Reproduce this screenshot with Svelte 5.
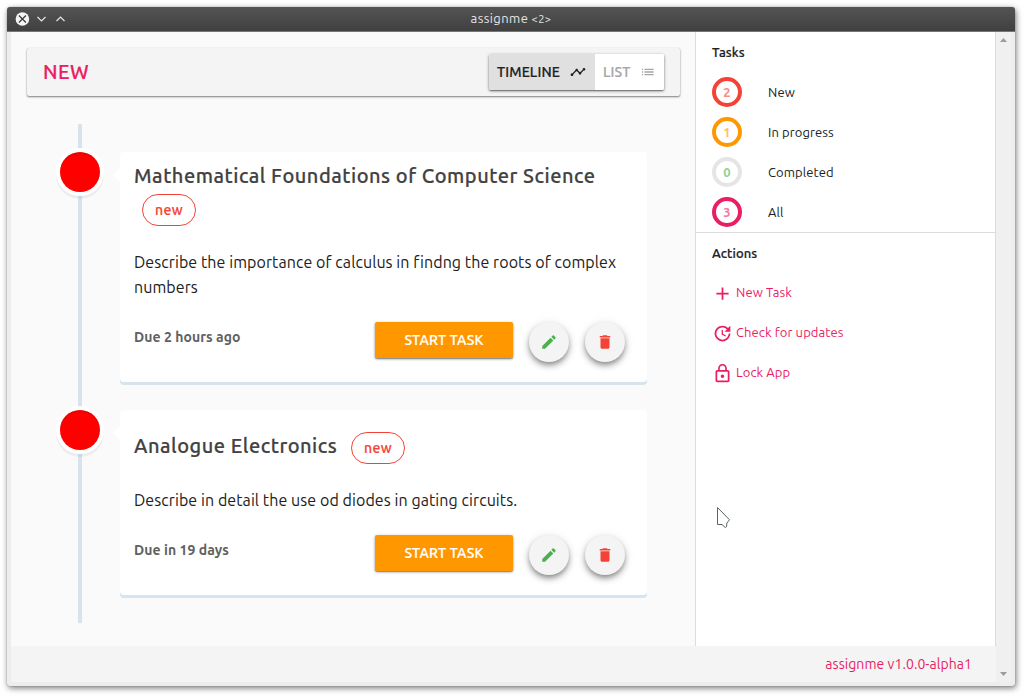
<script>
  const tasks = [
    { title: 'Mathematical Foundations of Computer Science', text: 'Describe the importance of calculus in findng the roots of complex numbers', due: 'Due 2 hours ago', wrapped: true },
    { title: 'Analogue Electronics', text: 'Describe in detail the use od diodes in gating circuits.', due: 'Due in 19 days', wrapped: false }
  ];
  const counts = [
    { n: 2, label: 'New', ring: '#f44336', ink: '#f98e86' },
    { n: 1, label: 'In progress', ring: '#ff9800', ink: '#ffc166' },
    { n: 0, label: 'Completed', ring: '#e5e5e5', ink: '#94cf96' },
    { n: 3, label: 'All', ring: '#e91e63', ink: '#f27aa2' }
  ];
  const actions = [
    { label: 'New Task', path: 'M19 13h-6v6h-2v-6H5v-2h6V5h2v6h6v2z' },
    { label: 'Check for updates', path: 'M21 10.12h-6.78l2.74-2.82c-2.73-2.7-7.15-2.8-9.88-.1-2.73 2.71-2.73 7.08 0 9.79s7.15 2.71 9.88 0C18.32 15.65 19 14.08 19 12.1h2c0 1.98-.88 4.55-2.64 6.29-3.51 3.48-9.21 3.48-12.72 0-3.5-3.47-3.53-9.11-.02-12.58s9.14-3.47 12.65 0L21 3v7.12zM12.5 8v4.25l3.5 2.08-.72 1.21L11 13V8h1.5z' },
    { label: 'Lock App', path: 'M12 17c1.1 0 2-.9 2-2s-.9-2-2-2-2 .9-2 2 .9 2 2 2zm6-9h-1V6c0-2.76-2.24-5-5-5S7 3.24 7 6v2H6c-1.1 0-2 .9-2 2v10c0 1.1.9 2 2 2h12c1.1 0 2-.9 2-2V10c0-1.1-.9-2-2-2zM8.9 6c0-1.71 1.39-3.1 3.1-3.1s3.1 1.39 3.1 3.1v2H8.9V6zM18 20H6V10h12v10z' }
  ];
</script>

<div class="desktop">
  <div class="window">
    <header class="titlebar">
      <svg class="controls" width="60" height="16" viewBox="0 0 60 16" fill="none">
        <circle cx="8.4" cy="8" r="6.8" fill="#f4f4f4" />
        <path d="M4.900 4.500l7 7m0-7l-7 7" stroke="#383838" stroke-width="1.2" />
        <path d="M23.500 6l4 4 4-4M42.500 10l4-4 4 4" stroke="#e6e6e6" stroke-width="1.2" />
      </svg>
      <span class="caption">assignme <small>&lt;2&gt;</small></span>
    </header>
    <div class="body">
      <div class="app">
        <div class="columns">
          <main>
            <div class="toolbar">
              <h1>NEW</h1>
              <div class="toggle">
                <button class="on">TIMELINE
                  <svg width="16" height="16" viewBox="0 0 24 24" fill="currentColor"><path d="M23 8c0 1.1-.9 2-2 2-.18 0-.35-.02-.51-.07l-3.560 3.550c.05.16.07.34.07.52 0 1.1-.9 2-2 2s-2-.9-2-2c0-.18.02-.36.07-.52l-2.550-2.550c-.16.05-.34.07-.52.07s-.36-.02-.52-.07l-4.550 4.560c.05.16.07.33.07.51 0 1.1-.9 2-2 2s-2-.9-2-2 .9-2 2-2c.18 0 .35.02.51.07l4.560-4.550C8.020 9.360 8 9.180 8 9c0-1.1.9-2 2-2s2 .9 2 2c0 .18-.02.36-.07.52l2.550 2.550c.16-.05.34-.07.52-.07s.36.02.52.07l3.550-3.560C19.020 8.350 19 8.180 19 8c0-1.1.9-2 2-2s2 .9 2 2z" /></svg>
                </button>
                <button class="off">LIST
                  <svg width="16" height="16" viewBox="0 0 24 24" fill="currentColor"><path d="M3 13h2v-2H3v2zm0 4h2v-2H3v2zm0-8h2V7H3v2zm4 4h14v-2H7v2zm0 4h14v-2H7v2zM7 7v2h14V7H7z" /></svg>
                </button>
              </div>
            </div>
            <section class="timeline">
              {#each tasks as task}
                <div class="event">
                  <div class="dot"></div>
                  <article>
                    <div class="heading" class:wrapped={task.wrapped}>
                      <h2>{task.title}</h2><span class="chip">new</span>
                    </div>
                    <p>{task.text}</p>
                    <div class="foot">
                      <strong>{task.due}</strong>
                      <button class="start">START TASK</button>
                      <button class="fab green" aria-label="Edit"><svg width="18" height="18" viewBox="0 0 24 24" fill="currentColor"><path d="M3 17.250V21h3.750L17.810 9.940l-3.750-3.750L3 17.250zM20.710 7.040c.39-.39.39-1.020 0-1.410l-2.340-2.340c-.39-.39-1.020-.39-1.410 0l-1.830 1.830 3.750 3.750 1.830-1.830z" /></svg></button>
                      <button class="fab red" aria-label="Delete"><svg width="18" height="18" viewBox="0 0 24 24" fill="currentColor"><path d="M6 19c0 1.1.9 2 2 2h8c1.1 0 2-.9 2-2V7H6v12zM19 4h-3.500l-1-1h-5l-1 1H5v2h14V4z" /></svg></button>
                    </div>
                  </article>
                </div>
              {/each}
            </section>
          </main>
          <aside>
            <section class="counts">
              <h3>Tasks</h3>
              {#each counts as c}
                <div class="count"><span class="ring" style="border-color:{c.ring};color:{c.ink}">{c.n}</span>{c.label}</div>
              {/each}
            </section>
            <section class="actions">
              <h3>Actions</h3>
              {#each actions as a}
                <div class="action"><span class="ico"><svg width="21" height="21" viewBox="0 0 24 24" fill="currentColor"><path d={a.path} /></svg></span>{a.label}</div>
              {/each}
            </section>
          </aside>
        </div>
        <footer>assignme v1.0.0-alpha1</footer>
      </div>
      <div class="scroll">
        <svg width="7" height="4"><path d="M0 4L3.500 0 7 4z" fill="#9b9b9b" /></svg>
        <svg width="7" height="4"><path d="M0 0h7L3.500 4z" fill="#9b9b9b" /></svg>
      </div>
    </div>
  </div>
  <svg class="pointer" width="18" height="26" viewBox="0 0 18 26"><path d="M2.500 2.500V19.500H7L10.300 22.500 11.500 21.800 11.900 18 14.500 14.800z" fill="#fff" stroke="#5c6464" /></svg>
</div>

<style>
  :global(body) { margin: 0; background: #fff; }
  * { box-sizing: border-box; }
  .desktop { position: relative; width: 1028px; height: 699px; padding: 7px 13px 13px 7px; overflow: hidden; font-family: Ubuntu, "Noto Sans", sans-serif; color: #212121; }
  .window { width: 1008px; height: 679px; border-radius: 4px 4px 3px 3px; display: flex; flex-direction: column; background: #ededed; box-shadow: 1px 2px 6px rgba(0,0,0,.55), 0 0 1px rgba(0,0,0,.4); }
  .titlebar { height: 25px; flex: none; background: linear-gradient(#545454, #404040); border-bottom: 1px solid #df4a42; border-radius: 3px 3px 0 0; display: grid; grid-template-columns: 60px 1fr 60px; align-items: center; padding: 0 7px 1px 7px; }
  .caption { text-align: center; color: #e4e4e4; font-size: 13px; line-height: 22px; letter-spacing: .4px; }
  .caption small { font-size: 11px; }
  .controls { display: block; }
  .body { flex: 1; display: flex; padding: 0 4px 4px; min-height: 0; }
  .app { width: 985px; display: flex; flex-direction: column; background: #fafafa; }
  .columns { display: flex; height: 614px; }
  main { width: 684px; padding: 16px 15px 0 16px; }
  .toolbar { height: 48px; background: #f4f4f4; display: flex; align-items: center; justify-content: space-between; padding: 0 16px; border-radius: 2px; box-shadow: 0 1px 2px rgba(0,0,0,.5), 0 0 1px rgba(0,0,0,.15); }
  h1, h2, h3, p { margin: 0; }
  h1, h2, h3, .chip, button { -webkit-text-stroke: .2px currentColor; }
  h1 { font-size: 20px; line-height: 20px; font-weight: 500; color: #e91e63; letter-spacing: .5px; }
  .toggle { display: flex; height: 36px; border-radius: 2px; overflow: hidden; background: #fff; box-shadow: 0 1px 3px rgba(0,0,0,.5), 0 1px 1px rgba(0,0,0,.25); }
  button { border: 0; margin: 0; padding: 0; font-family: inherit; font-size: 14px; font-weight: 500; }
  .toggle button { display: flex; align-items: center; gap: 10px; padding: 0 8px; letter-spacing: .15px; background: #fff; }
  .toggle .on { width: 106px; background: #e0e0e0; color: #212121; }
  .toggle .off { width: 69px; color: #a6a6a6; }
  .timeline { position: relative; margin-top: 28px; height: 499px; padding: 28px 0 0 33px; }
  .timeline::before { content: ""; position: absolute; left: 51px; top: 0; width: 4px; height: 499px; background: #d7e4ed; }
  .event { display: flex; gap: 20px; margin-bottom: 25px; }
  .dot { position: relative; width: 40px; height: 40px; flex: none; border-radius: 50%; background: #f00; box-shadow: 0 0 0 4px #fff, inset 0 2px 0 rgba(0,0,0,.08), 0 3px 0 4px rgba(0,0,0,.05); }
  article { position: relative; width: 527px; padding: 14px 22px 20px 14px; background: #fff; border-radius: 4px; box-shadow: 0 3px 0 #d7e4ed; margin-bottom: 3px; }
  article::before { content: ""; position: absolute; left: -7px; top: 16px; border: solid transparent; border-width: 7px 7px 7px 0; border-right-color: #fff; }
  .heading { display: flex; align-items: center; height: 48px; }
  h2 { font-size: 20px; line-height: 20px; font-weight: 500; letter-spacing: .52px; color: #424242; padding-bottom: 5px; }
  .chip { height: 32px; width: 54px; border: 1px solid #f44336; border-radius: 16px; color: #f44336; font-size: 14px; font-weight: 500; line-height: 30px; text-align: center; letter-spacing: .4px; margin-left: 13.600px; flex: none; }
  .wrapped { display: block; height: 68px; }
  .wrapped h2 { padding: 0; height: 20px; }
  .wrapped .chip { display: block; margin: 8px; }
  p { font-size: 16px; line-height: 25px; height: 51px; margin: 16px 0 21px; letter-spacing: .075px; }
  .heading:not(.wrapped) + p { height: 26px; }
  .foot { display: flex; height: 40px; align-items: flex-start; gap: 16px; }
  strong { flex: 1; font-size: 14px; line-height: 30px; color: #616161; letter-spacing: .05px; }
  .start { width: 138px; height: 36px; border-radius: 2px; background: #ff9800; color: #fff; letter-spacing: .15px; box-shadow: 0 1px 3px rgba(0,0,0,.4), 0 1px 1px rgba(0,0,0,.25); }
  .fab { width: 40px; height: 40px; border-radius: 50%; background: #f4f4f4; display: grid; place-items: center; box-shadow: 0 3px 5px -1px rgba(0,0,0,.3), 0 4px 7px rgba(0,0,0,.22), 0 1px 12px rgba(0,0,0,.08); }
  .green { color: #4caf50; }
  .red { color: #f44336; }
  aside { width: 301px; background: #fff; border: solid #dcdcdc; border-width: 0 1px; font-size: 13px; letter-spacing: .1px; }
  h3 { font-size: 13px; font-weight: 500; height: 40px; line-height: 40px; padding-left: 16px; }
  .counts { height: 201px; border-bottom: 1px solid #dcdcdc; }
  .count { height: 40px; display: flex; align-items: center; padding-left: 16px; gap: 26px; }
  .ring { width: 30px; height: 30px; border: 4px solid; border-radius: 50%; font-weight: 700; font-size: 13px; line-height: 22px; text-align: center; }
  .actions h3 { margin-bottom: -1px; }
  .action { display: flex; align-items: center; height: 40px; padding-left: 14px; color: #e91e63; }
  .ico { width: 24px; height: 24px; margin-right: 2px; display: grid; place-items: center; padding-top: 3px; }
  footer { height: 36px; background: #f4f4f4; color: #e91e63; font-size: 14px; line-height: 36px; text-align: right; padding-right: 24px; letter-spacing: .06px; }
  .scroll { width: 15px; background: #f0f0f0; display: flex; flex-direction: column; justify-content: space-between; align-items: center; padding: 6px 0; }
  .pointer { position: absolute; left: 715px; top: 505px; }
</style>
